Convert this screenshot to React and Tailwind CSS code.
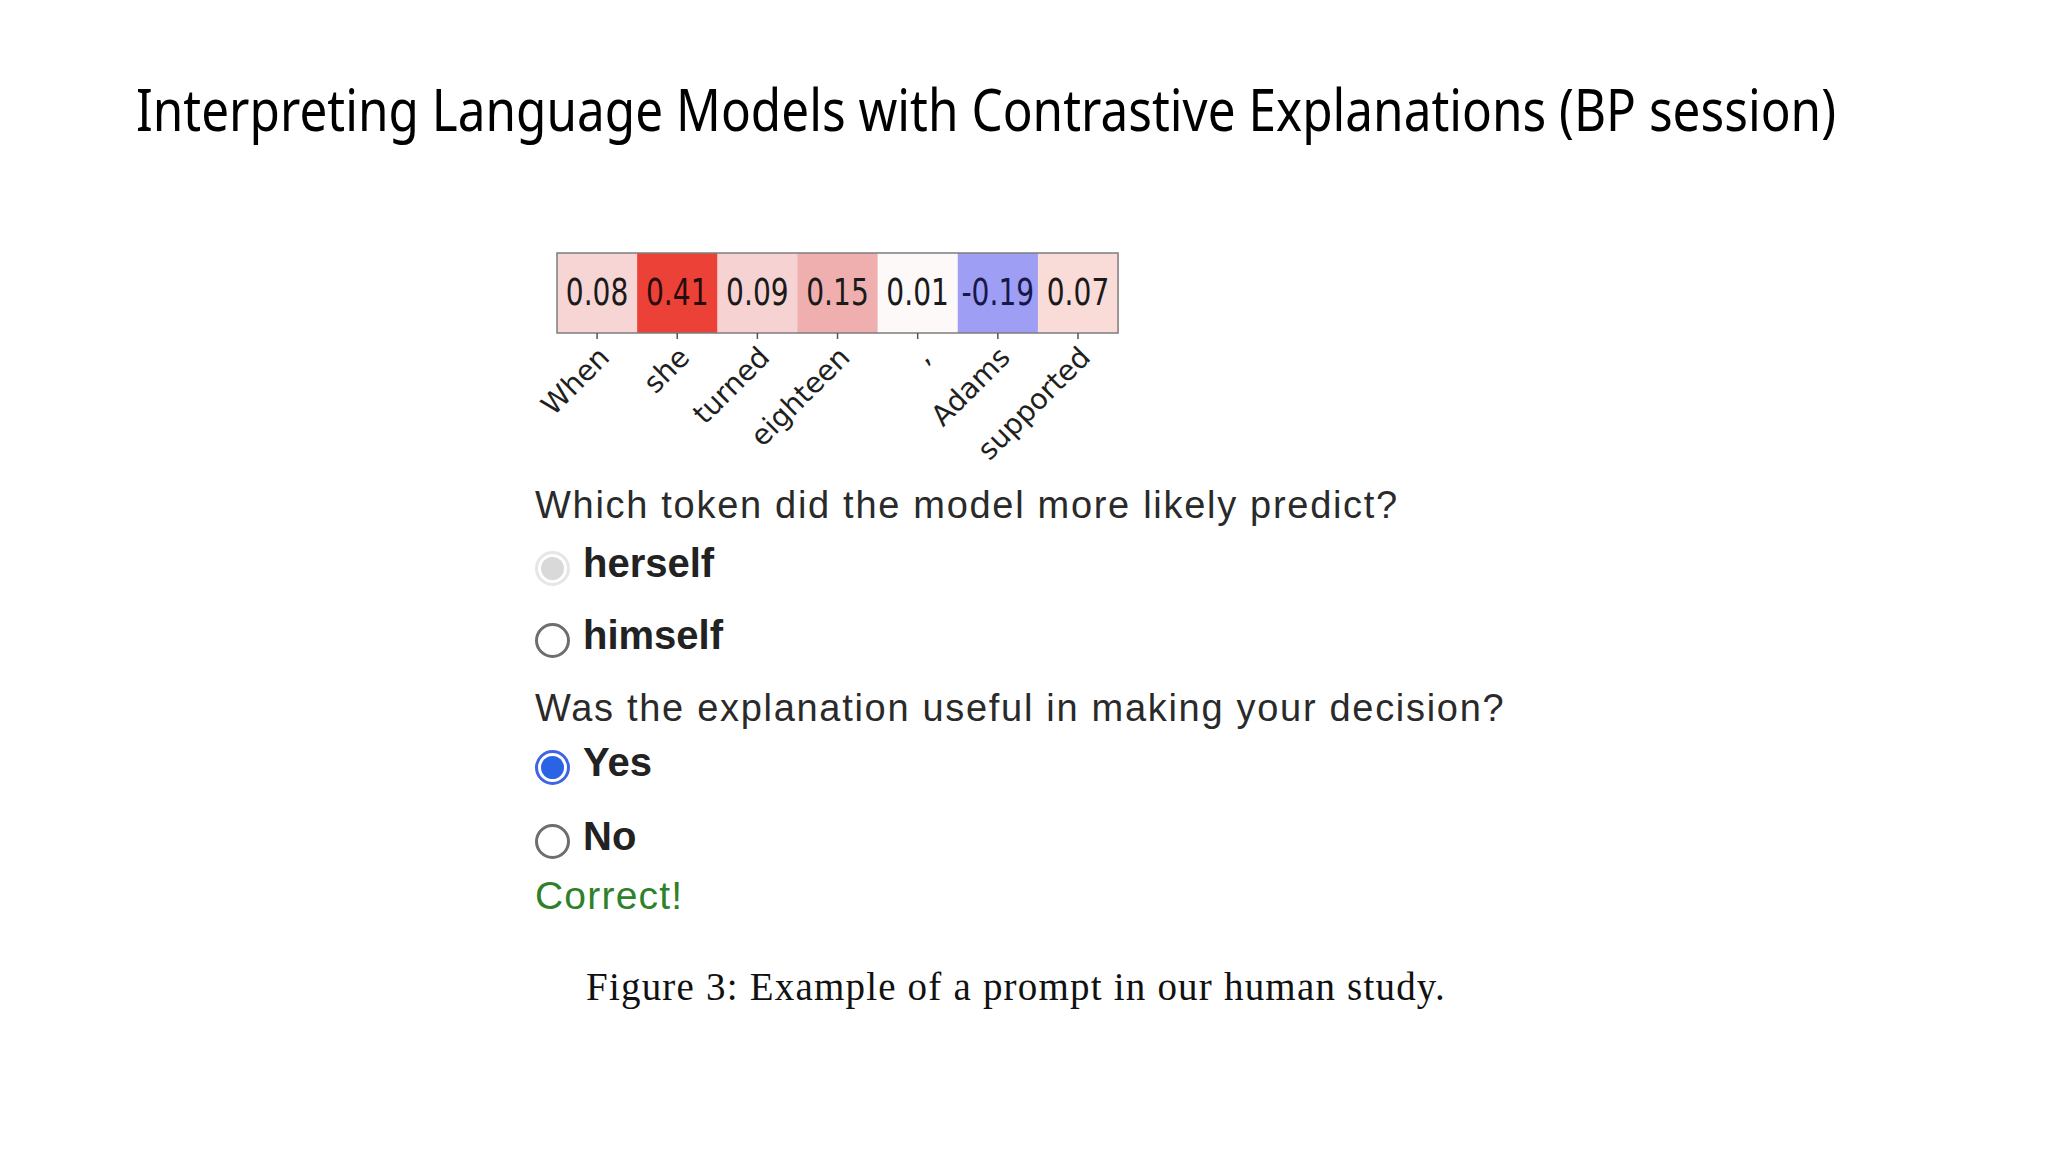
const cells = [
  { v: "0.08", t: "When", bg: "#f7d5d5", fg: "#1a1a1a" },
  { v: "0.41", t: "she", bg: "#ec4136", fg: "#2a0b0b" },
  { v: "0.09", t: "turned", bg: "#f7d2d2", fg: "#1a1a1a" },
  { v: "0.15", t: "eighteen", bg: "#f0afaf", fg: "#1a1a1a" },
  { v: "0.01", t: ",", bg: "#fdf9f9", fg: "#1a1a1a" },
  { v: "-0.19", t: "Adams", bg: "#9e9ef5", fg: "#17174a" },
  { v: "0.07", t: "supported", bg: "#f9dbd8", fg: "#1a1a1a" },
];

const X0 = 22;
const CW = 80.15;

function Heatmap() {
  return (
    <svg width="600" height="225" viewBox="0 0 600 225" className="block">
      {cells.map((c, i) => (
        <rect key={"r" + i} x={X0 + i * CW} y={8} width={CW + 0.5} height={80} fill={c.bg} />
      ))}
      <rect x={X0} y={8} width={CW * 7} height={80} fill="none" stroke="#7d7d7d" strokeWidth="1.5" />
      {cells.map((c, i) => {
        const cx = X0 + i * CW + CW / 2;
        return (
          <g key={"g" + i}>
            <text
              transform={`translate(${cx} 60) scale(0.76 1)`}
              textAnchor="middle"
              fontFamily="'DejaVu Sans', sans-serif"
              fontSize="37"
              fill={c.fg}
            >
              {c.v}
            </text>
            <line x1={cx} y1={88} x2={cx} y2={94} stroke="#555" strokeWidth="1.5" />
            <text
              x={cx + 14}
              y={114}
              transform={`rotate(-45 ${cx + 14} 114)`}
              textAnchor="end"
              fontFamily="'DejaVu Sans', sans-serif"
              fontSize="28.5"
              fill="#1f1f1f"
            >
              {c.t}
            </text>
          </g>
        );
      })}
    </svg>
  );
}

function Radio({ state }) {
  if (state === "disabled") {
    return (
      <span className="flex h-[35px] w-[35px] shrink-0 items-center justify-center rounded-full border-[3px] border-[#e6e6e6] bg-white">
        <span className="h-[23px] w-[23px] rounded-full bg-[#d9d9d9]" />
      </span>
    );
  }
  if (state === "checked") {
    return (
      <span className="flex h-[35px] w-[35px] shrink-0 items-center justify-center rounded-full border-[3px] border-[#4064e6] bg-white">
        <span className="h-[23px] w-[23px] rounded-full bg-[#2a63e4]" />
      </span>
    );
  }
  return <span className="block h-[35px] w-[35px] shrink-0 rounded-full border-[3px] border-[#6e6e6e] bg-white" />;
}

function Option({ state, label, className }) {
  return (
    <div className={"flex items-start gap-[13px] " + className}>
      <div className="pt-[12px]">
        <Radio state={state} />
      </div>
      <span className="text-[40px] leading-[48px] font-bold text-[#222]">{label}</span>
    </div>
  );
}

export default function App() {
  return (
    <div
      className="relative h-[1152px] w-[2048px] overflow-hidden bg-white pl-[136px] pt-[80px]"
      style={{ fontFamily: "'Liberation Sans', Arial, sans-serif" }}
    >
      <h1
        className="inline-block origin-left scale-x-[0.853] whitespace-nowrap text-[58px] leading-none font-normal text-black"
        style={{ fontFamily: "'Noto Sans', sans-serif" }}
      >
        Interpreting Language Models with Contrastive Explanations (BP session)
      </h1>

      <div className="ml-[399px] mt-[107px] flex flex-col">
        <Heatmap />
        <p className="mt-[11px] text-[38px] leading-[48px] tracking-[1.7px] text-[#2a2a2a]">
          Which token did the model more likely predict?
        </p>
        <Option state="disabled" label="herself" className="mt-[10px]" />
        <Option state="empty" label="himself" className="mt-[24px]" />
        <p className="mt-[25px] text-[38px] leading-[48px] tracking-[1.7px] text-[#2a2a2a]">
          Was the explanation useful in making your decision?
        </p>
        <Option state="checked" label="Yes" className="mt-[6px]" />
        <Option state="empty" label="No" className="mt-[26px]" />
        <p className="mt-[12px] text-[39px] leading-[48px] tracking-[1.2px] text-[#2f8129]">Correct!</p>
        <p
          className="ml-[51px] mt-[43px] text-[39px] leading-[48px] tracking-[1.2px] text-[#111]"
          style={{ fontFamily: "'Liberation Serif', 'Times New Roman', serif" }}
        >
          Figure 3: Example of a prompt in our human study.
        </p>
      </div>
    </div>
  );
}
